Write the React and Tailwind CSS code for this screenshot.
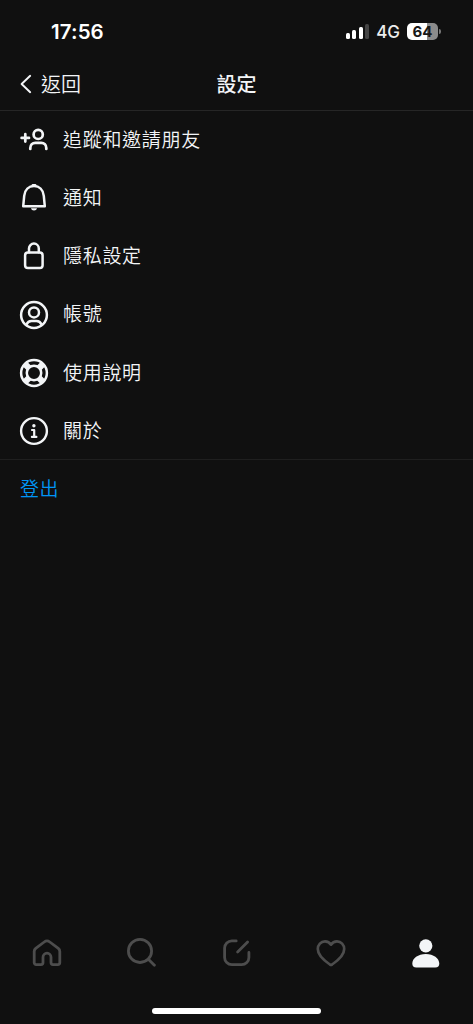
import React from 'react';

const stroke = {
  fill: 'none',
  stroke: 'currentColor',
  strokeLinecap: 'round',
  strokeLinejoin: 'round',
};

const Icon = ({ children, width = 2.5 }) => (
  <svg viewBox="0 0 32 32" className="block w-8 h-8 shrink-0" {...stroke} strokeWidth={width}>
    {children}
  </svg>
);

const FollowIcon = () => (
  <Icon width={2.7}>
    <path d="M7.3 10.2v7.4M3.6 13.9h7.4" />
    <circle cx="20.2" cy="10.4" r="4.6" />
    <path d="M12.3 25v-.9c0-3.2 2.2-5.2 5-5.2h6c2.8 0 5 2 5 5.2v.9" />
  </Icon>
);

const BellIcon = () => (
  <Icon>
    <path d="M5.200 24.300l1-10.500C6.900 7.600 10.800 4.100 16 4.100s9.100 3.500 9.800 9.700l1 10.500z" />
    <path d="M14.800 3.300h2.400" />
    <path d="M13 26.300h6c-.4 1.500-1.400 2.200-3 2.200s-2.600-.7-3-2.200z" fill="currentColor" stroke="none" />
  </Icon>
);

const LockIcon = () => (
  <Icon>
    <rect x="7.1" y="12.600" width="17.500" height="15.400" rx="2.800" />
    <path d="M11 12.300V8.500a4.900 4.900 0 0 1 9.800 0v3.800" />
  </Icon>
);

const AccountIcon = () => (
  <Icon>
    <circle cx="16" cy="16" r="12.900" />
    <circle cx="16" cy="13.400" r="5" />
    <path d="M8.500 25.600c1-2.500 2.700-3.500 5-3.500h5c2.300 0 4 1 5 3.500" />
  </Icon>
);

const HelpIcon = () => (
  <Icon>
    <circle cx="16" cy="16" r="12.900" />
    <circle cx="16" cy="16" r="7.200" />
    <path
      d="M7.200 7.200l4 4M24.800 7.200l-4 4M24.800 24.800l-4-4M7.200 24.800l4-4"
      strokeWidth="6.200"
      strokeLinecap="butt"
    />
  </Icon>
);

const InfoIcon = () => (
  <Icon width={2.4}>
    <circle cx="16" cy="16" r="12.900" />
    <path d="M14 15h2.200v6.800M13.900 21.900h4.500" strokeWidth="2.200" />
    <circle cx="15.900" cy="10.700" r="1.700" fill="currentColor" stroke="none" />
  </Icon>
);

const HomeTab = () => (
  <Icon width={2.8}>
    <path d="M3.200 14.400c0-1.300.5-2.300 1.500-3.100l8.500-6.300c1.700-1.300 3.900-1.300 5.600 0l8.500 6.300c1 .8 1.500 1.800 1.500 3.100v11.200a2 2 0 0 1-2 2h-4.800a2 2 0 0 1-2-2v-5.400a4 4 0 0 0-8 0v5.400a2 2 0 0 1-2 2H5.200a2 2 0 0 1-2-2z" />
  </Icon>
);

const SearchTab = () => (
  <Icon width={2.8}>
    <circle cx="14" cy="13.900" r="11.600" />
    <path d="M22.600 22.400l5.800 5.800" />
  </Icon>
);

const ComposeTab = () => (
  <Icon width={2.8}>
    <path d="M16.200 3.900h-4.400a7.200 7.200 0 0 0-7.200 7.200v9.400a7.200 7.200 0 0 0 7.200 7.200h9.900a7.200 7.200 0 0 0 7.200-7.200v-5" />
    <path d="M17.600 15l10-10" />
  </Icon>
);

const HeartTab = () => (
  <Icon width={2.7}>
    <path d="M16 7.700C14.600 5.500 12.400 4.400 10 4.400c-4.100 0-7.200 3.300-7.200 7.700 0 6.300 6.100 11.400 12.100 15.400.8.500 1.400.5 2.200 0 6-4 12.100-9.100 12.100-15.400 0-4.400-3.100-7.700-7.200-7.700-2.400 0-4.600 1.100-6 3.300z" />
  </Icon>
);

const ProfileTab = () => (
  <svg viewBox="0 0 32 32" className="block w-8 h-8" fill="currentColor">
    <circle cx="15.800" cy="8.800" r="6.600" />
    <path d="M2.300 26.500C2.300 21.400 8.100 17 15.800 17s13.500 4.400 13.500 9.500c0 2.700-1.300 4-4 4h-19c-2.700 0-4-1.300-4-4z" />
  </svg>
);

const menuItems = [
  { label: '追蹤和邀請朋友', icon: FollowIcon },
  { label: '通知', icon: BellIcon },
  { label: '隱私設定', icon: LockIcon },
  { label: '帳號', icon: AccountIcon },
  { label: '使用說明', icon: HelpIcon },
  { label: '關於', icon: InfoIcon },
];

const tabs = [
  { name: 'home', icon: HomeTab },
  { name: 'search', icon: SearchTab },
  { name: 'compose', icon: ComposeTab },
  { name: 'activity', icon: HeartTab },
  { name: 'profile', icon: ProfileTab, active: true },
];

const StatusBar = () => (
  <div className="h-[58px] pt-[5px] pl-[51px] pr-[32px] flex items-center justify-between text-white font-['Inter',sans-serif]">
    <span className="pt-0.5 text-[20.5px] font-semibold tracking-[0.1px]">17:56</span>
    <div className="flex items-center">
      <div className="flex items-end gap-[2.5px] h-[15px]">
        <span className="w-1 h-[6px] rounded-[1.5px] bg-white" />
        <span className="w-1 h-[9px] rounded-[1.5px] bg-white" />
        <span className="w-1 h-[12px] rounded-[1.5px] bg-white" />
        <span className="w-1 h-[15px] rounded-[1.5px] bg-[#444]" />
      </div>
      <span className="ml-[7px] pt-0.5 text-[17px] font-medium text-[#ededed]">4G</span>
      <div className="ml-[7px] w-[31px] h-[17px] rounded-[5px] bg-linear-to-r from-white from-65% to-[#8b8b8b] to-65% flex items-center justify-center text-[15px] leading-none font-bold text-[#181818]">
        64
      </div>
      <span className="ml-px w-[2px] h-[5px] rounded-r-full bg-[#777]" />
    </div>
  </div>
);

export default function App() {
  return (
    <div className="w-full h-screen flex flex-col overflow-hidden bg-[#101010] text-[#f3f5f7] font-['Liberation_Sans','Noto_Sans_CJK_TC',sans-serif]">
      <StatusBar />

      <header className="h-[53px] px-5 grid grid-cols-3 items-center border-b border-[#262626]">
        <button className="flex items-center text-left text-[20px] font-[350]">
          <svg viewBox="0 0 12 20" className="w-3 h-5 mr-[9px]" {...stroke} strokeWidth="1.9">
            <path d="M10.2 1.8L1.6 10l8.6 8.2" />
          </svg>
          <span className="pt-0.5">返回</span>
        </button>
        <h1 className="pt-0.5 text-center text-[20px] font-medium">設定</h1>
      </header>

      <main className="flex-1">
        <ul className="h-[349px] grid auto-rows-[58.2px] border-b border-[#1f1f1f]">
          {menuItems.map(({ label, icon: ItemIcon }) => (
            <li key={label} className="flex items-center pl-[18px] gap-[13px] text-[19px] tracking-[0.7px] font-[350]">
              <ItemIcon />
              <span className="pt-0.5">{label}</span>
            </li>
          ))}
        </ul>
        <button className="h-[58px] pt-0.5 pl-5 flex items-center text-[19px] tracking-[0.5px] text-[#0095f6] font-[350]">登出</button>
      </main>

      <nav className="h-[111px] pt-6 grid grid-cols-5 justify-items-center content-start">
        {tabs.map(({ name, icon: TabIcon, active }) => (
          <button key={name} aria-label={name} className={active ? 'text-[#f3f5f7]' : 'text-[#4d4d4d]'}>
            <TabIcon />
          </button>
        ))}
        <div className="col-span-5 mt-[39px] w-[169px] h-[6px] rounded-full bg-white" />
      </nav>
    </div>
  );
}
